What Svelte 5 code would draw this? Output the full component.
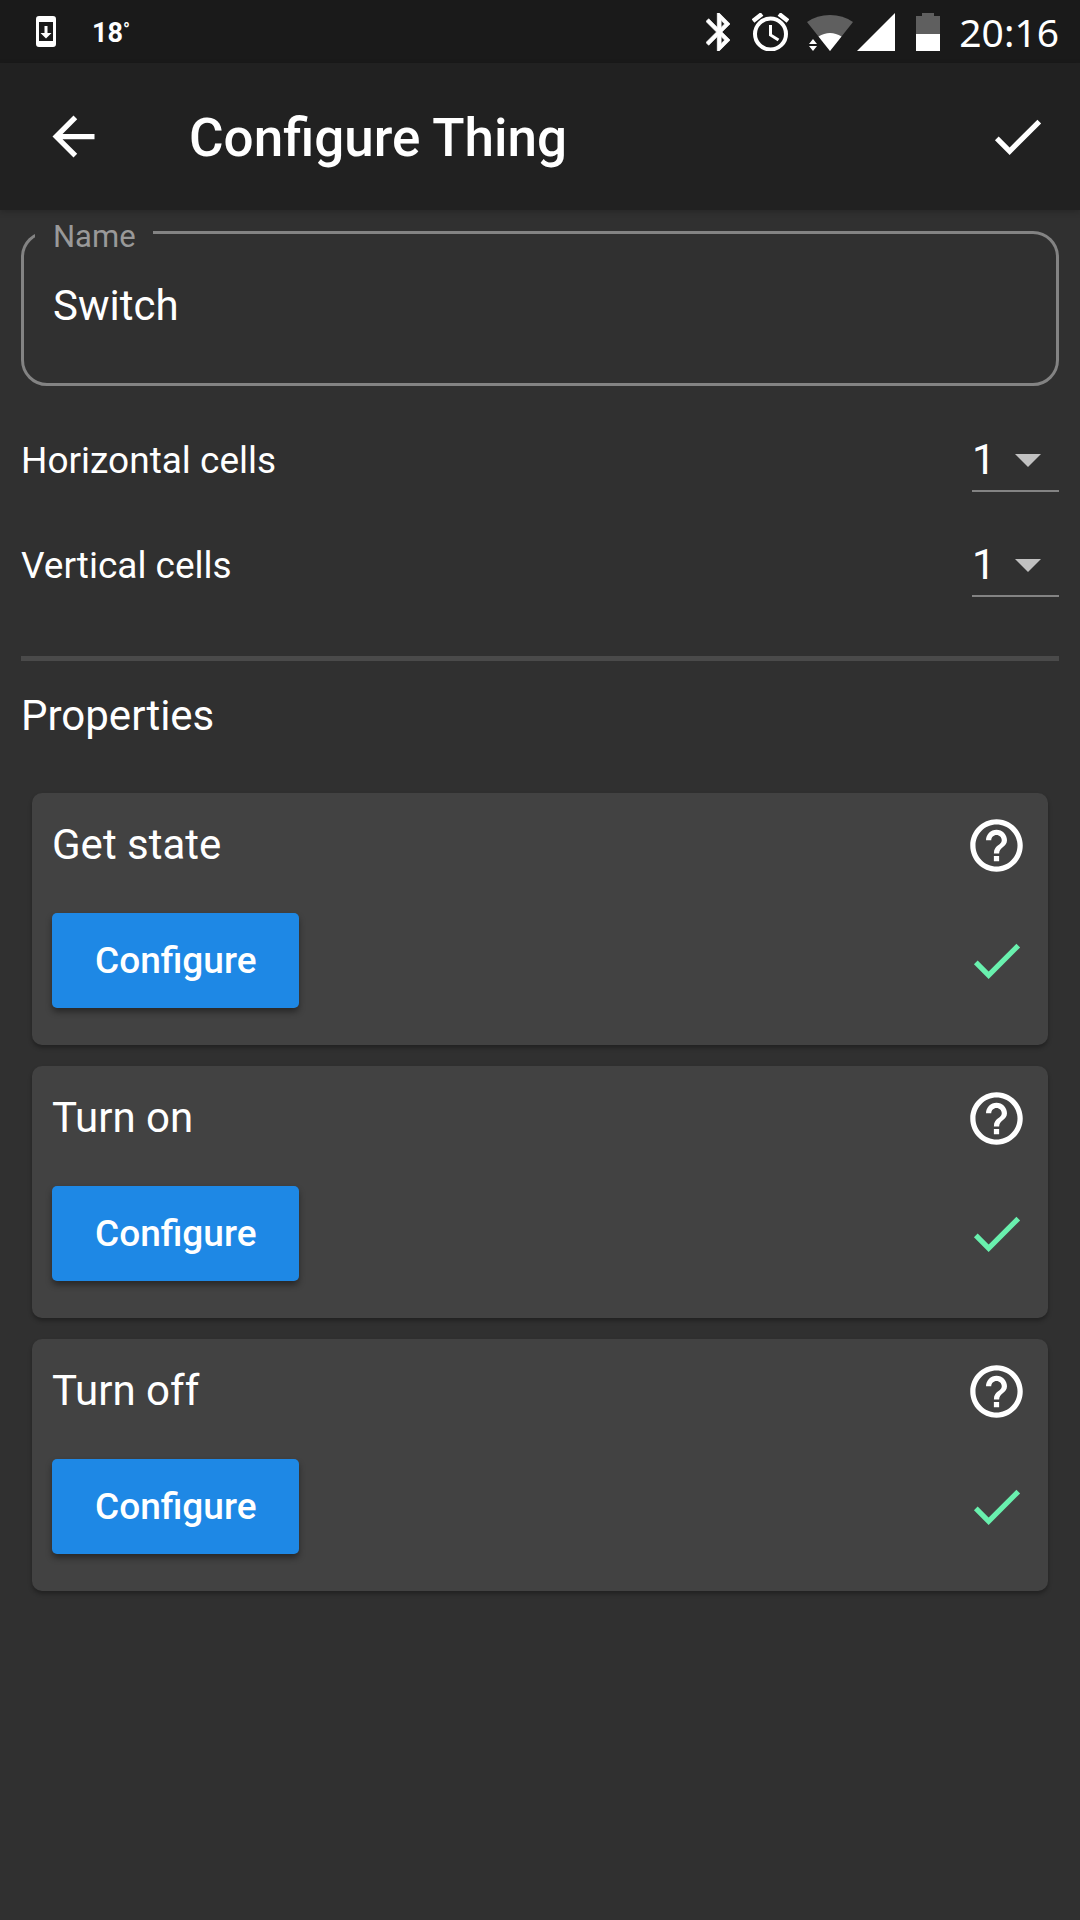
<script lang="ts">
  type Property = { id: string; title: string; configured: boolean };

  const cellOptions = [1, 2, 3, 4];

  const properties: Property[] = [
    { id: "get-state", title: "Get state", configured: true },
    { id: "turn-on", title: "Turn on", configured: true },
    { id: "turn-off", title: "Turn off", configured: true },
  ];

  let name = $state("Switch");
  let horizontal = $state(1);
  let vertical = $state(1);
</script>

{#snippet check()}
  <svg class="icon" viewBox="0 0 24 24" aria-hidden="true">
    <path d="M9 16.17L4.83 12l-1.42 1.41L9 19 21 7l-1.41-1.41z" />
  </svg>
{/snippet}

{#snippet caret()}
  <svg class="caret" viewBox="0 0 26 13" aria-hidden="true">
    <path d="M0 0h26L13 13z" />
  </svg>
{/snippet}

<div class="screen">
  <div class="status">
    <div class="status-left">
      <svg class="update" viewBox="0 0 20 31" aria-hidden="true">
        <path
          fill-rule="evenodd"
          d="M3 0h14a3 3 0 0 1 3 3v25a3 3 0 0 1-3 3H3a3 3 0 0 1-3-3V3a3 3 0 0 1 3-3zM3 6v19h14V6z"
        />
        <path d="M8.500 10h3v7h4L10 22.500 4.500 17h4z" />
      </svg>
      <span class="temp">18<span class="degree">°</span></span>
    </div>
    <div class="status-right">
      <svg class="bluetooth" viewBox="5 2 12.71 20" aria-hidden="true">
        <path
          stroke="currentColor"
          stroke-width="0.4"
          d="M17.71 7.71L12 2h-1v7.59L6.41 5 5 6.41 10.59 12 5 17.59 6.41 19 11 14.41V22h1l5.71-5.71-4.300-4.290 4.300-4.290zM13 5.830l1.880 1.880L13 9.590V5.830zm1.880 10.460L13 18.170v-3.760l1.880 1.880z"
        />
      </svg>
      <svg class="alarm" viewBox="0 0 37 38" aria-hidden="true">
        <circle cx="18.500" cy="21" r="15.500" fill="none" stroke="#fff" stroke-width="4" />
        <path d="M18.500 12v10l8 5" fill="none" stroke="#fff" stroke-width="3" />
        <path d="M1 8L10 1M36 8L27 1" fill="none" stroke="#fff" stroke-width="4.500" />
      </svg>
      <svg class="wifi" viewBox="0 0 46 38" aria-hidden="true">
        <path class="dim" d="M0 9Q10 2 23 2T46 9L23 38z" />
        <path d="M11.500 23.500Q17 20 23 20T34.500 23.500L23 38z" />
        <path d="M6 26l4 5H2zM2 33h8l-4 5z" />
      </svg>
      <svg class="signal" viewBox="0 0 38 38" aria-hidden="true">
        <path d="M38 0v38H0z" />
      </svg>
      <svg class="battery" viewBox="0 0 24 38" aria-hidden="true">
        <path class="dim" d="M6 0h12v3h6v18H0V3h6z" />
        <path d="M0 21h24v17H0z" />
      </svg>
      <time>20:16</time>
    </div>
  </div>

  <header>
    <button class="icon-button" aria-label="Back">
      <svg class="icon" viewBox="0 0 24 24" aria-hidden="true">
        <path d="M20 11H7.830l5.590-5.590L12 4l-8 8 8 8 1.410-1.410L7.830 13H20v-2z" />
      </svg>
    </button>
    <h1>Configure Thing</h1>
    <button class="icon-button" aria-label="Save">{@render check()}</button>
  </header>

  <main>
    <div class="field">
      <label for="name">Name</label>
      <input id="name" type="text" bind:value={name} />
    </div>

    <div class="row">
      <label for="horizontal">Horizontal cells</label>
      <div class="select">
        <select id="horizontal" bind:value={horizontal}>
          {#each cellOptions as n}
            <option value={n}>{n}</option>
          {/each}
        </select>
        {@render caret()}
      </div>
    </div>
    <div class="row">
      <label for="vertical">Vertical cells</label>
      <div class="select">
        <select id="vertical" bind:value={vertical}>
          {#each cellOptions as n}
            <option value={n}>{n}</option>
          {/each}
        </select>
        {@render caret()}
      </div>
    </div>

    <hr />

    <h2>Properties</h2>

    <div class="cards">
      {#each properties as property (property.id)}
        <section class="card">
          <div class="card-row">
            <h3>{property.title}</h3>
            <button class="icon-button" aria-label="Help">
              <svg class="icon" viewBox="0 0 24 24" aria-hidden="true">
                <path
                  d="M11 18h2v-2h-2v2zm1-16C6.480 2 2 6.480 2 12s4.480 10 10 10 10-4.480 10-10S17.520 2 12 2zm0 18c-4.410 0-8-3.590-8-8s3.590-8 8-8 8 3.590 8 8-3.590 8-8 8zm0-14c-2.210 0-4 1.790-4 4h2c0-1.100.900-2 2-2s2 .900 2 2c0 2-3 1.750-3 5h2c0-2.250 3-2.500 3-5 0-2.210-1.790-4-4-4z"
                />
              </svg>
            </button>
          </div>
          <div class="card-row">
            <button class="configure">Configure</button>
            {#if property.configured}
              <span class="done">{@render check()}</span>
            {/if}
          </div>
        </section>
      {/each}
    </div>
  </main>
</div>

<style>
  :global(body) {
    margin: 0;
    background: #303030;
  }

  .screen {
    min-height: 100vh;
    background: #303030;
    color: #fff;
    font-family: Roboto, sans-serif;
  }

  svg {
    display: block;
    flex: none;
    fill: currentColor;
  }

  button,
  input,
  select {
    margin: 0;
    padding: 0;
    border: 0;
    background: none;
    color: inherit;
    font-family: inherit;
  }

  h1,
  h2,
  h3 {
    margin: 0;
    font-weight: 400;
  }

  .status {
    display: flex;
    justify-content: space-between;
    height: 63px;
    padding: 0 21px 0 36px;
    background: #1a1a1a;
  }

  .status-left,
  .status-right {
    display: flex;
    align-items: center;
  }

  .update {
    width: 20px;
    height: 31px;
    margin-right: 36px;
  }

  .temp {
    padding-top: 3px;
    font-size: 27px;
    font-weight: 700;
    line-height: 32px;
  }

  .degree {
    font-size: 18px;
    line-height: 18px;
    vertical-align: 6px;
  }

  .dim {
    fill: #5f5f5f;
  }

  .bluetooth {
    width: 24px;
    height: 38px;
    margin-right: 22px;
  }

  .alarm {
    width: 37px;
    height: 38px;
    margin-right: 18px;
  }

  .wifi {
    width: 46px;
    height: 38px;
    margin-right: 4px;
  }

  .signal {
    width: 38px;
    height: 38px;
    margin-right: 21px;
  }

  .battery {
    width: 24px;
    height: 38px;
    margin-right: 19px;
  }

  time {
    font-family: "Noto Sans", sans-serif;
    font-size: 39px;
    line-height: 63px;
  }

  header {
    position: relative;
    display: flex;
    align-items: center;
    height: 147px;
    padding: 0 31px 0 42px;
    background: #212121;
    box-shadow: 0 2px 6px rgba(0, 0, 0, 0.2);
  }

  h1 {
    flex: 1;
    margin-left: 84px;
    padding-top: 3px;
    font-size: 53px;
    font-weight: 500;
    line-height: 60px;
  }

  .icon {
    width: 63px;
    height: 63px;
  }

  .icon-button {
    cursor: pointer;
  }

  main {
    padding: 21px;
  }

  .field {
    position: relative;
    margin-bottom: 21px;
  }

  .field label {
    position: absolute;
    top: -10px;
    left: 14px;
    padding: 0 17px 0 18px;
    background: #303030;
    color: #999;
    font-size: 31px;
    line-height: 32px;
  }

  .field input {
    display: block;
    box-sizing: border-box;
    width: 100%;
    height: 155px;
    padding: 0 29px 6px;
    border: 3px solid #838383;
    border-radius: 26px;
    font-size: 42px;
    outline: none;
  }

  .row {
    display: flex;
    align-items: center;
    justify-content: space-between;
    height: 105px;
  }

  .row label {
    padding-top: 2px;
    font-size: 37px;
    line-height: 44px;
  }

  .select {
    display: grid;
    align-items: center;
    width: 87px;
    border-bottom: 2px solid #838383;
  }

  .select select,
  .caret {
    grid-area: 1 / 1;
  }

  .select select {
    width: 100%;
    height: 63px;
    padding-top: 2px;
    appearance: none;
    font-size: 42px;
    outline: none;
  }

  .caret {
    justify-self: end;
    width: 26px;
    height: 13px;
    margin: 4px 18px 0 0;
    color: #c1c1c1;
    pointer-events: none;
  }

  option {
    color: #000;
  }

  hr {
    height: 5px;
    margin: 39px 0 30px;
    border: 0;
    background: #4a4a4a;
  }

  h2 {
    font-size: 42px;
    line-height: 50px;
  }

  .cards {
    display: grid;
    gap: 21px;
    margin-top: 52px;
    padding: 0 11px;
  }

  .card {
    display: grid;
    gap: 36px;
    padding: 21px 20px 37px;
    border-radius: 10px;
    background: #424242;
    box-shadow: 0 3px 4px rgba(0, 0, 0, 0.3);
  }

  .card-row {
    display: flex;
    align-items: center;
    justify-content: space-between;
  }

  h3 {
    padding-bottom: 2px;
    font-size: 42px;
    line-height: 50px;
  }

  .configure {
    height: 95px;
    padding: 0 43px;
    border-radius: 5px;
    background: #1e88e5;
    box-shadow: 0 4px 6px rgba(0, 0, 0, 0.4);
    font-size: 37px;
    font-weight: 500;
    cursor: pointer;
  }

  .done {
    color: #69f0ae;
  }
</style>
